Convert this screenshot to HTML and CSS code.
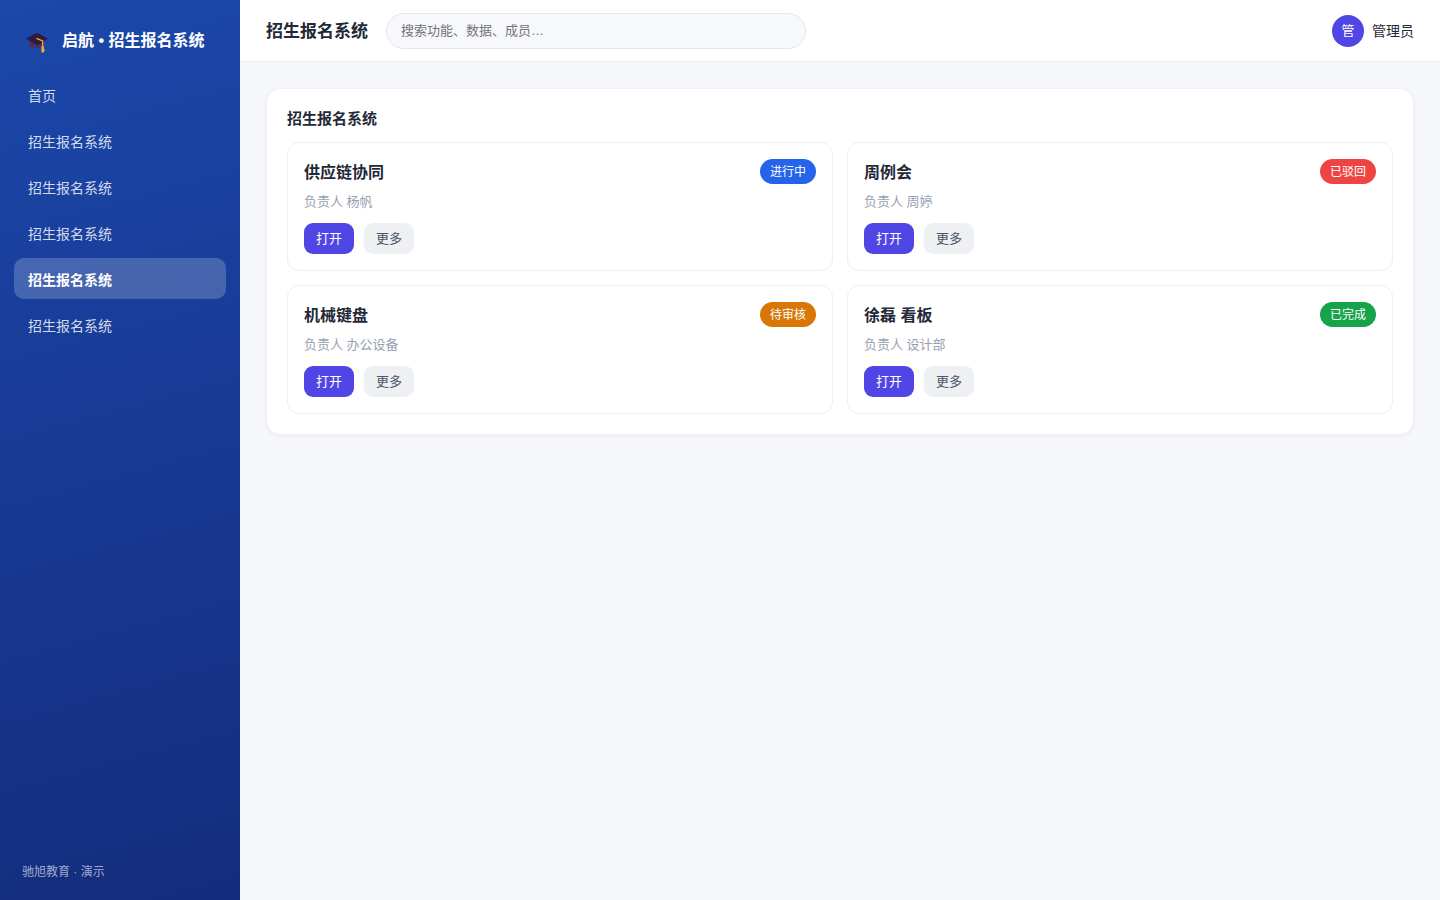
FILE: index.html
```html
<!DOCTYPE html>
<html lang="zh-CN">
<head>
<meta charset="utf-8">
<meta name="viewport" content="width=device-width, initial-scale=1">
<title>招生报名系统</title>
<link rel="stylesheet" href="styles.css">
</head>
<body>
<div class="app">
  <aside class="sidebar">
    <div class="brand">
      <svg class="brand-icon" viewBox="0 0 24 24" aria-hidden="true">
        <path d="M4 11v4.500c0 4 14 4 14 0V11z" fill="#482f5c"/>
        <path d="M1 9.500 10.500 4.500q1-.5 2 0L22 9.500 13 15.500q-1 .5-2 0z" fill="#2f1b40"/>
        <path d="M11 9.500 17 12v8" fill="none" stroke="#fbad26" stroke-width="1.200"/>
        <path d="M15.800 17H18v2l1 1.500-1 2.500h-2.200z" fill="#fbad26"/>
      </svg>
      <span>启航 • 招生报名系统</span>
    </div>
    <nav class="nav">
      <a class="nav-link" href="#">首页</a>
      <a class="nav-link" href="#">招生报名系统</a>
      <a class="nav-link" href="#">招生报名系统</a>
      <a class="nav-link" href="#">招生报名系统</a>
      <a class="nav-link nav-link-active" href="#" aria-current="page">招生报名系统</a>
      <a class="nav-link" href="#">招生报名系统</a>
    </nav>
    <div class="sidebar-foot">驰旭教育 · 演示</div>
  </aside>
  <div class="content">
    <header class="topbar">
      <h1 class="page-title">招生报名系统</h1>
      <input class="search" type="search" placeholder="搜索功能、数据、成员…" aria-label="搜索功能、数据、成员">
      <div class="user"><span class="avatar">管</span><span>管理员</span></div>
    </header>
    <main class="main">
      <section class="panel">
        <h2 class="panel-title">招生报名系统</h2>
        <div class="cards">
          <article class="card">
            <div class="card-head"><h3 class="card-title">供应链协同</h3><span class="tag tag-blue">进行中</span></div>
            <p class="card-meta">负责人 杨帆</p>
            <div class="actions"><button class="btn btn-primary" type="button">打开</button><button class="btn" type="button">更多</button></div>
          </article>
          <article class="card">
            <div class="card-head"><h3 class="card-title">周例会</h3><span class="tag tag-red">已驳回</span></div>
            <p class="card-meta">负责人 周婷</p>
            <div class="actions"><button class="btn btn-primary" type="button">打开</button><button class="btn" type="button">更多</button></div>
          </article>
          <article class="card">
            <div class="card-head"><h3 class="card-title">机械键盘</h3><span class="tag tag-amber">待审核</span></div>
            <p class="card-meta">负责人 办公设备</p>
            <div class="actions"><button class="btn btn-primary" type="button">打开</button><button class="btn" type="button">更多</button></div>
          </article>
          <article class="card">
            <div class="card-head"><h3 class="card-title">徐磊 看板</h3><span class="tag tag-green">已完成</span></div>
            <p class="card-meta">负责人 设计部</p>
            <div class="actions"><button class="btn btn-primary" type="button">打开</button><button class="btn" type="button">更多</button></div>
          </article>
        </div>
      </section>
    </main>
  </div>
</div>
</body>
</html>
```
FILE: styles.css
```css
* { box-sizing: border-box; }

body {
  margin: 0;
  font-family: "Liberation Sans", "Noto Sans CJK SC", sans-serif;
  font-size: 14px;
  line-height: 22px;
  color: #1f2937;
  background: #f5f7fb;
}

h1, h2, h3, p { margin: 0; }

.app { display: flex; min-height: 100vh; }

.sidebar {
  display: flex;
  flex-direction: column;
  flex: 0 0 240px;
  padding: 18px 14px;
  color: #fff;
  background: linear-gradient(165deg, #1b48ab, #142c7d);
}

.brand {
  display: flex;
  align-items: center;
  gap: 12px;
  padding: 10px 10px 20px 11px;
  font-size: 16px;
  font-weight: 700;
  line-height: 26px;
  white-space: nowrap;
}

.brand-icon { width: 25px; height: 26px; }

.nav { display: flex; flex-direction: column; gap: 5px; }

.nav-link {
  padding: 11px 14px 8px;
  border-radius: 10px;
  line-height: 22px;
  color: rgba(255, 255, 255, .82);
  text-decoration: none;
}

.nav-link-active {
  font-weight: 700;
  color: #fff;
  background: rgba(255, 255, 255, .2);
}

.sidebar-foot {
  margin-top: auto;
  padding: 0 8px;
  font-size: 12px;
  line-height: 20px;
  color: rgba(255, 255, 255, .6);
}

.content { flex: 1; min-width: 0; }

.topbar {
  display: flex;
  align-items: center;
  gap: 18px;
  height: 62px;
  padding: 0 26px;
  background: #fff;
  border-bottom: 1px solid #edeff3;
}

.page-title { padding-top: 2px; font-size: 17px; line-height: 26px; white-space: nowrap; }

.search {
  flex: 0 1 420px;
  min-width: 0;
  height: 36px;
  padding: 0 14px;
  border: 1px solid #e3e5ef;
  border-radius: 18px;
  background: #f7f8fc;
  font: inherit;
  font-size: 13px;
  color: #1f2937;
  appearance: none;
}

.search::placeholder { color: #757575; }

.user { display: flex; align-items: center; gap: 8px; margin-left: auto; white-space: nowrap; }

.avatar {
  width: 32px;
  height: 32px;
  border-radius: 50%;
  font-size: 13px;
  line-height: 32px;
  text-align: center;
  color: #fff;
  background: #4f46e5;
}

.main { padding: 26px; }

.panel {
  padding: 20px;
  border: 1px solid #eff1f5;
  border-radius: 14px;
  background: #fff;
  box-shadow: 0 1px 4px rgba(31, 41, 85, .05);
}

.panel-title { margin-bottom: 14px; font-size: 15px; line-height: 19px; }

.cards { display: grid; grid-template-columns: repeat(2, minmax(0, 1fr)); gap: 14px; }

.card { padding: 16px; border: 1px solid #eeeff2; border-radius: 12px; }

.card-head { display: flex; align-items: flex-start; justify-content: space-between; }

.card-title { font-size: 16px; line-height: 27px; }

.tag {
  padding: 1px 10px 0;
  border-radius: 13px;
  font-size: 12px;
  line-height: 24px;
  color: #fff;
}

.tag-blue { background: #2563eb; }
.tag-red { background: #ef4444; }
.tag-amber { background: #d97706; }
.tag-green { background: #16a34a; }

.card-meta { margin: 6px 0 11px; font-size: 13px; line-height: 20px; color: #98a1b2; }

.actions { display: flex; gap: 10px; }

.btn {
  height: 31px;
  padding: 0 12px;
  border: 0;
  border-radius: 9px;
  font: inherit;
  font-size: 13px;
  color: #475569;
  background: #eef0f4;
}

.btn-primary { color: #fff; background: #4f46e5; }
```
